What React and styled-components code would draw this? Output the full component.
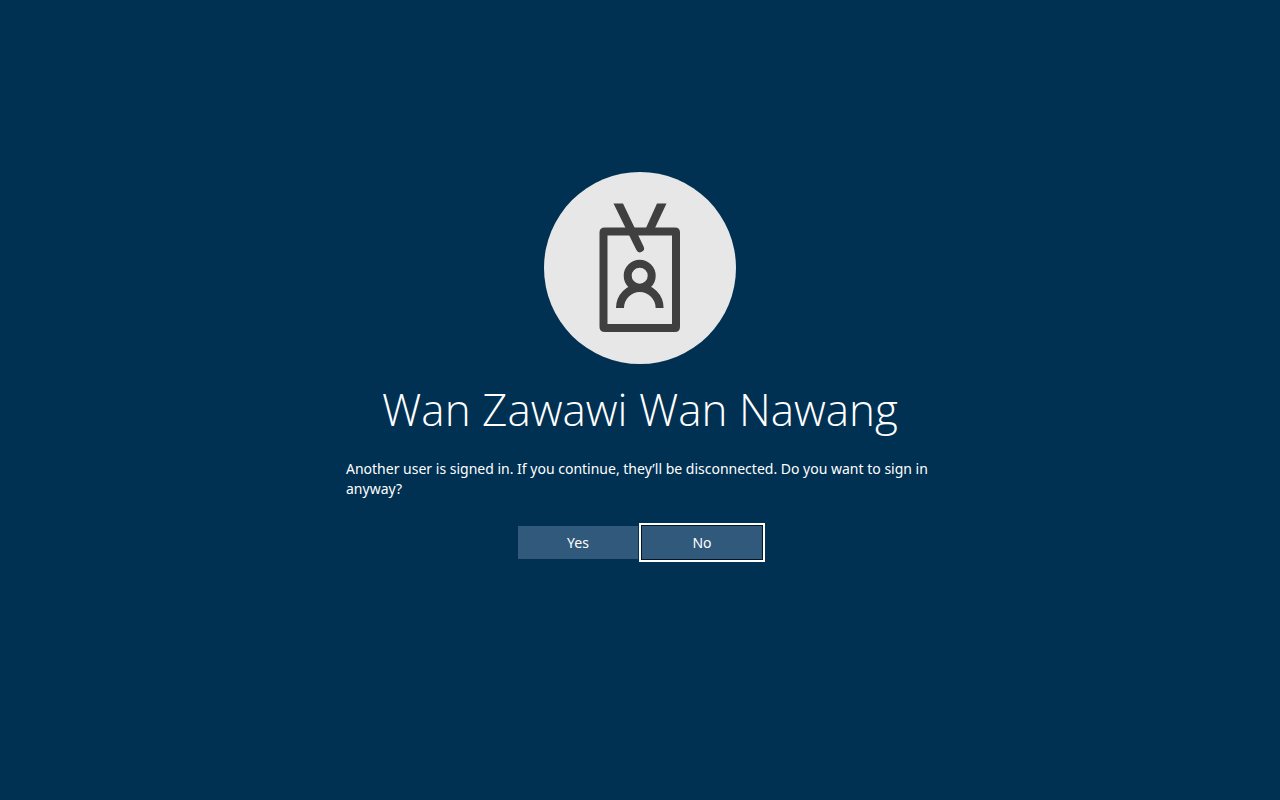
import React from "react";
import styled, { createGlobalStyle } from "styled-components";

const GlobalStyle = createGlobalStyle`
  *, *::before, *::after { box-sizing: border-box; }
  body {
    margin: 0;
    background: #003153;
    color: #fff;
    font-family: "Noto Sans", "Open Sans", sans-serif;
  }
`;

const Screen = styled.main`
  min-height: 100vh;
  display: flex;
  flex-direction: column;
  align-items: center;
  padding: 172px 24px 24px;
`;

const Avatar = styled.div`
  width: 192px;
  height: 192px;
  border-radius: 50%;
  background: #e7e7e7;
  overflow: hidden;

  svg { display: block; }
`;

const UserName = styled.h1`
  margin: 16px 0 0;
  font-family: "Open Sans", "Noto Sans", sans-serif;
  font-size: 44px;
  line-height: 58px;
  font-weight: 300;
  text-align: center;
`;

const Message = styled.p`
  width: 100%;
  max-width: 588px;
  margin: 21px 0 0;
  font-size: 14px;
  line-height: 20px;
`;

const Actions = styled.div`
  display: flex;
  gap: 4px;
  margin-top: 27px;
`;

const ActionButton = styled.button`
  width: 120px;
  height: 33px;
  padding: 0;
  border: 0;
  background: #31597b;
  color: #fff;
  font-family: inherit;
  font-size: 14px;
  line-height: 20px;
  outline: none;
  box-shadow: ${({ $focused }) =>
    $focused ? "0 0 0 1px #001526, 0 0 0 3px #fff" : "none"};
`;

function BadgeIcon() {
  return (
    <svg width="192" height="192" viewBox="0 0 192 192" fill="none" stroke="#404040" strokeWidth="8" aria-hidden="true">
      <path fill="#404040" fillRule="evenodd" stroke="none" d="M61 55.500H131Q136 55.500 136 60.500V155Q136 160 131 160H61Q55.500 160 55.500 155V60.500Q55.500 55.500 61 55.500ZM63.500 63.500V152H128V63.500Z" />
      <path fill="#404040" stroke="none" d="M69.500 31.500H79L99.600 74.500A4 4 0 0 1 92.400 78Z" />
      <path fill="#404040" stroke="none" d="M113 31.500H122.500L110.500 57H101.500Z" />
      <circle cx="95.700" cy="103.700" r="12" />
      <path d="M76 136A19.800 20 0 0 1 115.600 136" />
    </svg>
  );
}

export default function App() {
  return (
    <>
      <GlobalStyle />
      <Screen>
        <Avatar>
          <BadgeIcon />
        </Avatar>
        <UserName>Wan Zawawi Wan Nawang</UserName>
        <Message>
          Another user is signed in. If you continue, they’ll be disconnected. Do you want to sign in anyway?
        </Message>
        <Actions>
          <ActionButton type="button">Yes</ActionButton>
          <ActionButton type="button" $focused>No</ActionButton>
        </Actions>
      </Screen>
    </>
  );
}
